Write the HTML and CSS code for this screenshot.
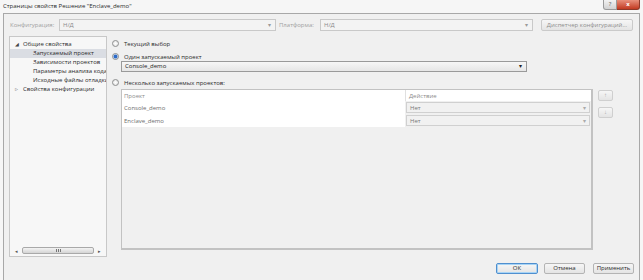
FILE: index.html
```html
<!DOCTYPE html>
<html lang="ru">
<head>
<meta charset="UTF-8">
<title>Страницы свойств</title>
<link rel="stylesheet" href="styles.css">
</head>
<body>
<div class="titlebar">
  <span class="title">Страницы свойств Решение "Enclave_demo"</span>
  <div class="winbtns">
    <span class="help">?</span>
    <span class="close">x</span>
  </div>
</div>
<div class="window">
  <div class="config-row">
    <span class="lbl lbl-conf">Конфигурация:</span>
    <div class="combo combo-off combo-conf">Н/Д<span class="arrow">▾</span></div>
    <span class="lbl lbl-plat">Платформа:</span>
    <div class="combo combo-off combo-plat">Н/Д<span class="arrow">▾</span></div>
    <div class="btn btn-manager">Диспетчер конфигураций...</div>
  </div>

  <div class="main">
    <div class="tree">
      <div class="tree-items">
        <div class="node"><span class="exp">◢</span>Общие свойства</div>
        <div class="node child selected">Запускаемый проект</div>
        <div class="node child">Зависимости проектов</div>
        <div class="node child">Параметры анализа кода</div>
        <div class="node child">Исходные файлы отладки</div>
        <div class="node"><span class="exp exp-closed">▹</span>Свойства конфигурации</div>
      </div>
      <div class="hscroll">
        <span class="sarrow">◂</span>
        <div class="thumb"><span class="grip"></span></div>
        <span class="sarrow">▸</span>
      </div>
    </div>

    <div class="pane">
      <div class="radio-row"><span class="radio"></span>Текущий выбор</div>
      <div class="radio-row second"><span class="radio on"></span>Один запускаемый проект</div>
      <div class="combo combo-project">Console_demo<span class="arrow dark">▾</span></div>
      <div class="radio-row third"><span class="radio"></span>Несколько запускаемых проектов:</div>

      <div class="multi">
        <div class="grid">
          <div class="grid-row head">
            <div class="cell c-name">Проект</div>
            <div class="cell c-act">Действие</div>
          </div>
          <div class="grid-row">
            <div class="cell c-name">Console_demo</div>
            <div class="cell c-act"><div class="mini-combo">Нет<span class="arrow">▾</span></div></div>
          </div>
          <div class="grid-row">
            <div class="cell c-name">Enclave_demo</div>
            <div class="cell c-act"><div class="mini-combo">Нет<span class="arrow">▾</span></div></div>
          </div>
        </div>
        <div class="move-btns">
          <div class="btn move">↑</div>
          <div class="btn move">↓</div>
        </div>
      </div>
    </div>
  </div>

  <div class="footer">
    <div class="btn dlg-btn ok">ОК</div>
    <div class="btn dlg-btn cancel">Отмена</div>
    <div class="btn dlg-btn apply">Применить</div>
  </div>
</div>
</body>
</html>
```

FILE: styles.css
```css
body {
  margin: 0;
  width: 643px;
  height: 280px;
  overflow: hidden;
  background-color: #f6f6f6;
  font-family: "Open Sans", "Noto Sans", sans-serif;
  font-size: 6px;
  color: #2a2a2a;
}

/* title bar */
.titlebar {
  display: flex;
  height: 13px;
  align-items: flex-start;
}
.title {
  padding: 3px 0 0 3px;
  line-height: 7px;
}
.winbtns {
  display: flex;
  margin-left: auto;
  margin-right: 3px;
}
.winbtns span {
  height: 10px;
  line-height: 9px;
  text-align: center;
  font-size: 6px;
  box-sizing: border-box;
}
.help {
  width: 14px;
  background: linear-gradient(#f2f2f2, #d2d2d2);
  color: #555;
  border: 1px solid #9a9a9a;
  border-top: none;
  border-radius: 0 0 0 3px;
}
.close {
  width: 23px;
  background: linear-gradient(#e8907c, #c23b22);
  color: #fff;
  border: 1px solid #8c3a2a;
  border-top: none;
  border-left: none;
  border-radius: 0 0 3px 0;
  font-weight: bold;
}

/* dialog */
.window {
  margin-left: 3px;
  width: 637px;
  height: 267px;
  box-sizing: border-box;
  border: 1px solid #a8a8a8;
  border-bottom: none;
  background-color: #f0f0f0;
}

.config-row {
  display: flex;
  align-items: center;
  padding: 5px 0 0 6px;
  height: 12px;
}
.lbl {
  color: #a0a0a0;
}
.lbl-conf {
  width: 49px;
}
.lbl-plat {
  width: 41px;
  margin-left: 3px;
}

.combo {
  position: relative;
  height: 12px;
  line-height: 10px;
  box-sizing: border-box;
  border: 1px solid #c9c9c9;
  padding-left: 3px;
  background-color: #f3f3f3;
}
.combo-off {
  color: #8a8a8a;
}
.combo-conf {
  width: 217px;
}
.combo-plat {
  width: 213px;
}
.arrow {
  position: absolute;
  right: 4px;
  top: 0;
  color: #9a9a9a;
  font-size: 6px;
}
.arrow.dark {
  color: #222;
}

.btn {
  box-sizing: border-box;
  border: 1px solid #b4b4b4;
  border-radius: 2px;
  background: linear-gradient(#f6f6f6, #e4e4e4);
  text-align: center;
}
.btn-manager {
  width: 92px;
  height: 12px;
  line-height: 10px;
  margin-left: 8px;
  color: #8e8e8e;
  border-color: #cacaca;
}

.main {
  display: flex;
  margin-top: 5px;
}

/* tree */
.tree {
  display: flex;
  flex-direction: column;
  width: 98px;
  height: 221px;
  margin-left: 5px;
  box-sizing: border-box;
  border: 1px solid #c8c8c8;
  background-color: #f7f7f7;
  overflow: hidden;
}
.tree-items {
  flex: 1;
  padding-top: 3px;
}
.node {
  height: 9px;
  line-height: 9px;
  padding-left: 5px;
  white-space: nowrap;
}
.node.child {
  padding-left: 23px;
}
.node.selected {
  background-color: #dadde3;
}
.exp {
  display: inline-block;
  width: 8px;
  font-size: 5px;
  color: #444;
}
.exp-closed {
  color: #888;
  font-size: 6px;
}
.hscroll {
  display: flex;
  align-items: center;
  height: 9px;
  margin-bottom: 1px;
  padding: 0 3px;
}
.sarrow {
  width: 7px;
  font-size: 5px;
  color: #555;
  text-align: center;
}
.thumb {
  flex: 1;
  height: 7px;
  margin: 0 2px;
  box-sizing: border-box;
  border: 1px solid #a9a9a9;
  border-radius: 2px;
  background: linear-gradient(#f4f4f4, #d4d4d4);
  display: flex;
  align-items: center;
  justify-content: center;
}
.grip {
  width: 5px;
  height: 3px;
  background: repeating-linear-gradient(90deg, #777 0 1px, transparent 1px 2px);
}

/* right pane */
.pane {
  margin-left: 5px;
  padding-top: 3px;
}
.radio-row {
  display: flex;
  align-items: center;
  height: 9px;
}
.radio-row.second {
  margin-top: 4px;
}
.radio-row.third {
  margin-top: 6px;
}
.radio {
  display: inline-block;
  width: 7px;
  height: 7px;
  box-sizing: border-box;
  border: 1px solid #8e8f8f;
  border-radius: 50%;
  background: radial-gradient(#ffffff, #dedede);
  margin-right: 5px;
}
.radio.on {
  background: radial-gradient(circle, #2d6bc8 0 1.6px, #c4d6ef 2.2px);
}
.combo-project {
  width: 406px;
  margin-left: 9px;
  height: 11px;
  line-height: 9px;
  background: linear-gradient(#f7f7f7, #e6e6e6);
  border-color: #9a9a9a;
  color: #222;
}

.multi {
  display: flex;
  margin: 2px 0 0 9px;
}
.grid {
  width: 472px;
  height: 161px;
  box-sizing: border-box;
  border: 1px solid #c2c2c2;
  border-width: 1px 2px 2px 1px;
  background-color: #f0f0f0;
}
.grid-row {
  display: flex;
  height: 13px;
}
.grid-row.head {
  height: 11px;
  background-color: #fff;
  color: #8c8c8c;
}
.cell {
  box-sizing: border-box;
  padding-left: 2px;
  display: flex;
  align-items: center;
}
.c-name {
  width: 283px;
  background-color: #fff;
  color: #6e6e6e;
}
.head .c-name {
  color: #8c8c8c;
}
.c-act {
  flex: 1;
  padding: 0 1px 0 1px;
}
.head .c-act {
  border-left: 1px solid #e0e0e0;
  padding-left: 3px;
}
.mini-combo {
  position: relative;
  width: 100%;
  height: 11px;
  line-height: 10px;
  box-sizing: border-box;
  border: 1px solid #d0d0d0;
  background-color: #f1f1f1;
  color: #777;
  padding-left: 3px;
}
.mini-combo .arrow {
  right: 3px;
  color: #aaa;
}

.move-btns {
  margin-left: 5px;
  padding-top: 1px;
}
.btn.move {
  width: 15px;
  height: 11px;
  line-height: 9px;
  font-size: 6px;
  color: #aaa;
  border-color: #cfcfcf;
  margin-bottom: 6px;
}

/* bottom buttons */
.footer {
  display: flex;
  justify-content: flex-end;
  margin-top: 6px;
  padding-right: 5px;
}
.dlg-btn {
  height: 11px;
  line-height: 9px;
  width: 41px;
}
.dlg-btn.ok {
  width: 42px;
  border-color: #4f8fcf;
  box-shadow: inset 0 0 0 1px #a8d4f5;
}
.dlg-btn.cancel {
  margin-left: 6px;
}
.dlg-btn.apply {
  margin-left: 8px;
}
```
